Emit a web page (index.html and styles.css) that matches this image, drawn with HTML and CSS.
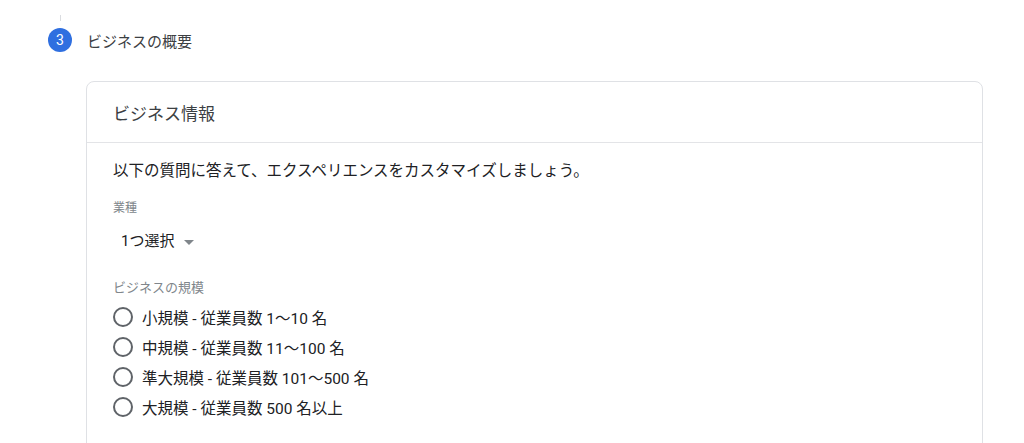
FILE: index.html
```html
<!DOCTYPE html>
<html lang="ja">
<head>
<meta charset="utf-8">
<link rel="stylesheet" href="styles.css">
</head>
<body>
<div class="page">
  <div class="connector"></div>
  <div class="step">
    <div class="step-num">3</div>
    <div class="step-title">ビジネスの概要</div>
  </div>
  <div class="card">
    <div class="card-head">ビジネス情報</div>
    <div class="card-body">
      <p class="intro">以下の質問に答えて、エクスペリエンスをカスタマイズしましょう。</p>
      <div class="label label-industry">業種</div>
      <div class="select">
        <span>1つ選択</span>
        <span class="caret"></span>
      </div>
      <div class="label label-size">ビジネスの規模</div>
      <div class="radios">
        <div class="radio"><span class="ring"></span><span>小規模 - 従業員数 1～10 名</span></div>
        <div class="radio"><span class="ring"></span><span>中規模 - 従業員数 11～100 名</span></div>
        <div class="radio"><span class="ring"></span><span>準大規模 - 従業員数 101～500 名</span></div>
        <div class="radio"><span class="ring"></span><span>大規模 - 従業員数 500 名以上</span></div>
      </div>
    </div>
  </div>
</div>
</body>
</html>
```
FILE: styles.css
```css
html, body {
  margin: 0;
  padding: 0;
  background: #ffffff;
  overflow: hidden;
}
body {
  font-family: Roboto, "Noto Sans CJK JP", sans-serif;
  color: #3c4043;
}
.page {
  width: 1024px;
  height: 443px;
  overflow: hidden;
}
.connector {
  width: 1px;
  height: 6px;
  background: #dadce0;
  margin: 15px 0 0 60px;
}
.step {
  display: flex;
  align-items: center;
  gap: 15px;
  margin: 7px 0 0 48px;
  height: 24px;
}
.step-num {
  width: 24px;
  height: 24px;
  border-radius: 50%;
  background: #2f6fe0;
  color: #fff;
  font-size: 14px;
  display: flex;
  align-items: center;
  justify-content: center;
}
.step-title {
  font-size: 15px;
  color: #3c4043;
}
.card {
  margin: 29px 0 0 86px;
  width: 895px;
  height: 420px;
  border: 1px solid #dfe1e5;
  border-radius: 8px;
}
.card-head {
  height: 60px;
  border-bottom: 1px solid #e3e4e7;
  padding-left: 26px;
  display: flex;
  align-items: center;
  font-size: 17px;
  color: #3c4043;
}
.card-body {
  padding: 17px 26px 0 26px;
}
.intro {
  margin: 0;
  font-size: 15.5px;
  line-height: 22px;
  color: #202124;
}
.label {
  font-size: 12px;
  color: #80868b;
  line-height: 16px;
}
.label-industry {
  margin-top: 18px;
}
.select {
  display: flex;
  align-items: center;
  gap: 10px;
  margin: 14px 0 0 8px;
  font-size: 15px;
  line-height: 22px;
  color: #202124;
}
.caret {
  width: 0;
  height: 0;
  border-left: 5px solid transparent;
  border-right: 5px solid transparent;
  border-top: 5px solid #80868b;
  margin-top: 2px;
}
.label-size {
  margin-top: 28px;
  font-size: 13px;
}
.radios {
  margin-top: 6px;
  display: flex;
  flex-direction: column;
}
.radio {
  display: flex;
  align-items: center;
  gap: 9px;
  height: 30px;
  font-size: 15.5px;
  color: #202124;
}
.ring {
  box-sizing: border-box;
  width: 20px;
  height: 20px;
  border: 2px solid #5f6368;
  border-radius: 50%;
  flex: none;
}
```
